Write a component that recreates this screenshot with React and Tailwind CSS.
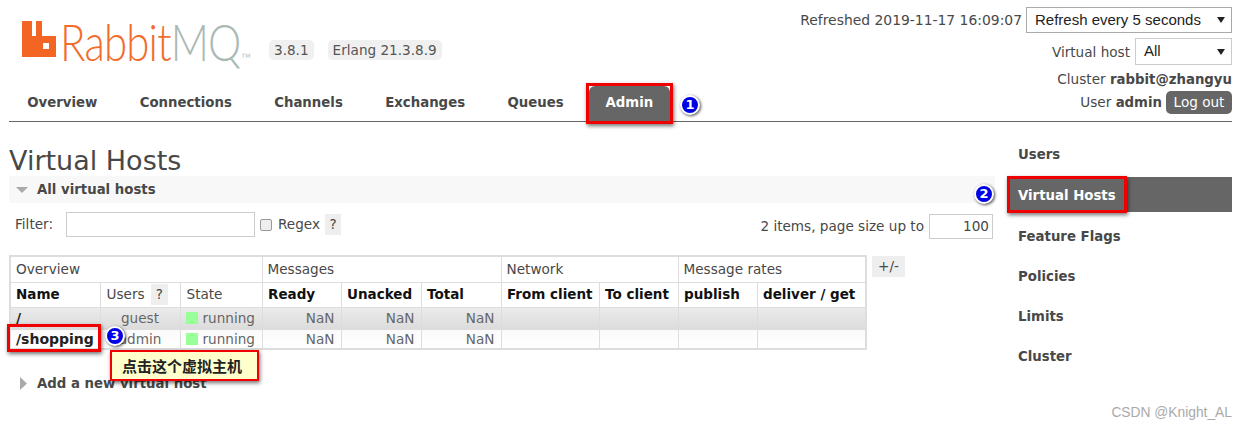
import React from 'react';

const tabs = ['Overview', 'Connections', 'Channels', 'Exchanges', 'Queues'];
const side = ['Feature Flags', 'Policies', 'Limits', 'Cluster'];

const columns = [90, 80, 82, 79, 80, 80, 98, 79, 79, 109];

const rows = [
  { name: '/', user: 'guest', bg: 'bg-gradient-to-b from-[#ececec] to-[#dcdcdc]' },
  { name: '/shopping', user: 'admin', bg: 'bg-gradient-to-b from-[#fafafa] to-[#ffffff]' },
];

const Marker = ({ n, className }) => (
  <div className={`absolute w-[20px] h-[20px] rounded-full bg-[#0000e6] border-2 border-white shadow-[1px_1px_3px_rgba(0,0,0,0.7)] text-white text-[13px] font-bold flex items-center justify-center ${className}`}>
    {n}
  </div>
);

const RedBox = ({ className }) => (
  <div className={`absolute border-[3px] border-[#f00000] shadow-[1px_2px_4px_rgba(0,0,0,0.55)] ${className}`} />
);

const Caret = () => (
  <svg width="8" height="6" viewBox="0 0 8 6" className="shrink-0">
    <path d="M0 0H8L4 6Z" fill="#222" />
  </svg>
);

const Logo = () => (
  <div className="flex items-start h-[40px] w-[232px]">
    <svg width="34" height="37" viewBox="0 0 34 37" className="mt-[1px] shrink-0">
      <path
        fillRule="evenodd"
        d="M0 0H10V15H14V0H20V15H34V36H0ZM21 22V28H27V22Z"
        fill="#f26522"
      />
    </svg>
    <div className="flex origin-top scale-y-[1.2] ml-[4px] mt-[-2px] text-[42px] leading-[40px] tracking-[-0.8px] font-light font-['Lato',sans-serif]">
      <span className="text-[#f26c2c]">Rabbit</span>
      <span className="text-[#a9bab4]">MQ</span>
    </div>
    <span className="text-[6px] text-[#bbb] mt-[31px] ml-[1px]">TM</span>
  </div>
);

const App = () => {
  return (
    <div className="relative w-[1247px] h-[429px] overflow-hidden bg-white px-[9px] text-[13.6px] text-[#484848] font-['DejaVu_Sans',sans-serif]">
      <header className="flex justify-between h-[122px] w-[1223px] border-b border-[#666]">
        <div className="flex flex-col justify-between pl-[13px]">
          <div className="flex items-start pt-[20px]">
            <Logo />
            <div className="flex gap-[14px] mt-[20px] ml-[15px] text-[#555]">
              <span className="h-[20px] px-[5px] rounded-[5px] bg-[#f0f0f0] leading-[20px]">3.8.1</span>
              <span className="h-[20px] px-[5px] rounded-[5px] bg-[#f0f0f0] leading-[20px]">Erlang 21.3.8.9</span>
            </div>
          </div>
          <nav className="flex items-end -ml-[16px] text-[13.3px]">
            {tabs.map((t) => (
              <div key={t} className="px-[21.2px] h-[35px] leading-[33px] font-bold">{t}</div>
            ))}
            <div className="w-[81px] h-[35px] ml-[4px] rounded-t-[6px] bg-[#666] text-white font-bold text-center leading-[33px]">Admin</div>
          </nav>
        </div>

        <div className="flex flex-col items-end">
          <div className="flex items-center mt-[7px] gap-[4px]">
            <span className="pt-[1px] text-[13.9px]">Refreshed 2019-11-17 16:09:07</span>
            <div className="flex items-center justify-between w-[206px] h-[26px] pl-[8px] pr-[6px] border border-[#aaa] text-[#222] text-[15px] font-['Liberation_Sans',sans-serif]">
              Refresh every 5 seconds
              <Caret />
            </div>
          </div>
          <div className="flex items-center mt-[5px] gap-[5px]">
            <span className="pt-[1px]">Virtual host</span>
            <div className="flex items-center justify-between w-[97px] h-[27px] pl-[8px] pr-[6px] border border-[#ccc] text-[#222] text-[15px] font-['Liberation_Sans',sans-serif]">
              All
              <Caret />
            </div>
          </div>
          <div className="mt-[5px] leading-[16px] pt-[1px]">
            Cluster <b className="text-[13.3px]">rabbit@zhangyu</b>
          </div>
          <div className="flex items-center mt-[3px] gap-[4px]">
            <span>User <b className="text-[13.3px]">admin</b></span>
            <div className="w-[66px] h-[23px] rounded-[5px] bg-[#666] text-white text-center leading-[23px]">Log out</div>
          </div>
        </div>
      </header>

      <div className="flex">
        <main className="w-[986px] shrink-0">
          <h1 className="mt-[22px] h-[32px] text-[27px] leading-[34px] font-normal">Virtual Hosts</h1>
          <div className="flex items-center h-[27px] pl-[7px] bg-[#f8f8f8] font-bold text-[13.3px]">
            <svg width="12" height="6" viewBox="0 0 12 6" className="mr-[9px]">
              <path d="M0 0H12L6 6Z" fill="#aaa" />
            </svg>
            All virtual hosts
          </div>

          <div className="flex items-center justify-between mt-[8px] h-[28px] pl-[6px] pr-[2px]">
            <div className="flex items-center -mt-[1px]">
              <span className="w-[51px]">Filter:</span>
              <div className="w-[189px] h-[25px] border border-[#ccc]" />
              <div className="w-[12px] h-[12px] ml-[5px] rounded-[2px] border border-[#999] bg-[#eee]" />
              <span className="ml-[6px]">Regex</span>
              <span className="ml-[5px] w-[16px] h-[21px] bg-[#eee] text-center leading-[21px]">?</span>
            </div>
            <div className="flex items-center gap-[5px] mt-[3px]">
              <span>2 items, page size up to</span>
              <div className="w-[64px] h-[25px] border border-[#ccc] text-right pr-[3px] leading-[23px]">100</div>
            </div>
          </div>

          <div className="flex items-start mt-[16px]">
            <table className="table-fixed border-collapse w-[856px] shrink-0 border-2 border-[#ddd]">
              <colgroup>
                {columns.map((w, i) => <col key={i} style={{ width: w }} />)}
              </colgroup>
              <thead>
                <tr className="h-[26px]">
                  <th colSpan={3} className="border border-[#ddd] pl-[5px] text-left font-normal">Overview</th>
                  <th colSpan={3} className="border border-[#ddd] pl-[5px] text-left font-normal">Messages</th>
                  <th colSpan={2} className="border border-[#ddd] pl-[5px] text-left font-normal">Network</th>
                  <th colSpan={2} className="border border-[#ddd] pl-[5px] text-left font-normal">Message rates</th>
                </tr>
                <tr className="h-[25px] text-[#111] text-[13.5px]">
                  <th className="border border-[#ddd] pl-[5px] text-left font-bold">Name</th>
                  <th className="border border-[#ddd] pl-[6px] text-left font-normal text-[13.6px] text-[#484848]">
                    Users <span className="inline-block w-[17px] h-[21px] ml-[2px] bg-[#eee] text-center leading-[21px]">?</span>
                  </th>
                  <th className="border border-[#ddd] pl-[6px] text-left font-normal text-[13.6px] text-[#484848]">State</th>
                  {['Ready', 'Unacked', 'Total', 'From client', 'To client', 'publish', 'deliver / get'].map((h) => (
                    <th key={h} className="border border-[#ddd] pl-[5.5px] text-left font-bold whitespace-nowrap">{h}</th>
                  ))}
                </tr>
              </thead>
              <tbody>
                {rows.map((r, i) => (
                  <tr key={r.name} className={`${i === 0 ? 'h-[22px]' : 'h-[20px]'} ${r.bg} text-[#666]`}>
                    <td className="border border-[#ddd] pl-[5px] text-[14px] font-bold text-[#222] leading-[16px]">{r.name}</td>
                    <td className="border border-[#ddd] text-center leading-[16px]">{r.user}</td>
                    <td className="border border-[#ddd] pl-[5px] leading-[16px]">
                      <span className="inline-block align-[-1px] w-[12px] h-[12px] mr-[5px] bg-[#99ff99]" />
                      running
                    </td>
                    {[0, 1, 2].map((c) => (
                      <td key={c} className="border border-[#ddd] pr-[6px] text-right leading-[16px]">NaN</td>
                    ))}
                    {[0, 1, 2, 3].map((c) => (
                      <td key={c} className="border border-[#ddd]" />
                    ))}
                  </tr>
                ))}
              </tbody>
            </table>
            <div className="ml-[5px] mt-[1px] w-[33px] h-[21px] bg-[#eee] text-center leading-[21px]">+/-</div>
          </div>

          <div className="flex items-center mt-[24px] ml-[11px] font-bold text-[13.3px]">
            <svg width="7" height="13" viewBox="0 0 7 13" className="mr-[10px]">
              <path d="M0 0L7 6.5L0 13Z" fill="#aaa" />
            </svg>
            Add a new virtual host
          </div>
        </main>

        <aside className="w-[224px] ml-[13px] pt-[23px] font-bold text-[13.3px]">
          <div className="h-[20px] pl-[10px] leading-[20px]">Users</div>
          <div className="h-[35px] mt-[12px] pl-[10px] rounded-tl-[6px] bg-[#666] text-white leading-[37px]">Virtual Hosts</div>
          <div className="mt-[15px] flex flex-col gap-[20px]">
            {side.map((s) => (
              <div key={s} className="h-[20px] pl-[10px] leading-[20px]">{s}</div>
            ))}
          </div>
        </aside>
      </div>

      <RedBox className="left-[586px] top-[83px] w-[87px] h-[41px]" />
      <RedBox className="left-[1007px] top-[176px] w-[120px] h-[37px]" />
      <RedBox className="left-[7px] top-[324px] w-[94px] h-[28px]" />

      <Marker n="1" className="left-[680px] top-[95px]" />
      <Marker n="2" className="left-[974px] top-[184px]" />
      <Marker n="3" className="left-[105px] top-[326px]" />

      <div className="absolute left-[110px] top-[350px] w-[149px] h-[31px] bg-[#ffffcc] border-2 border-[#f00000] shadow-[1px_2px_4px_rgba(0,0,0,0.55)] pl-[10px] leading-[27px] text-[15px] font-bold text-[#222] font-['Noto_Sans_CJK_SC',sans-serif]">
        点击这个虚拟主机
      </div>

      <div className="absolute right-[15px] top-[403px] text-[13.8px] text-[#aaa] font-['Liberation_Sans',sans-serif]">CSDN @Knight_AL</div>
    </div>
  );
};

export default App;
